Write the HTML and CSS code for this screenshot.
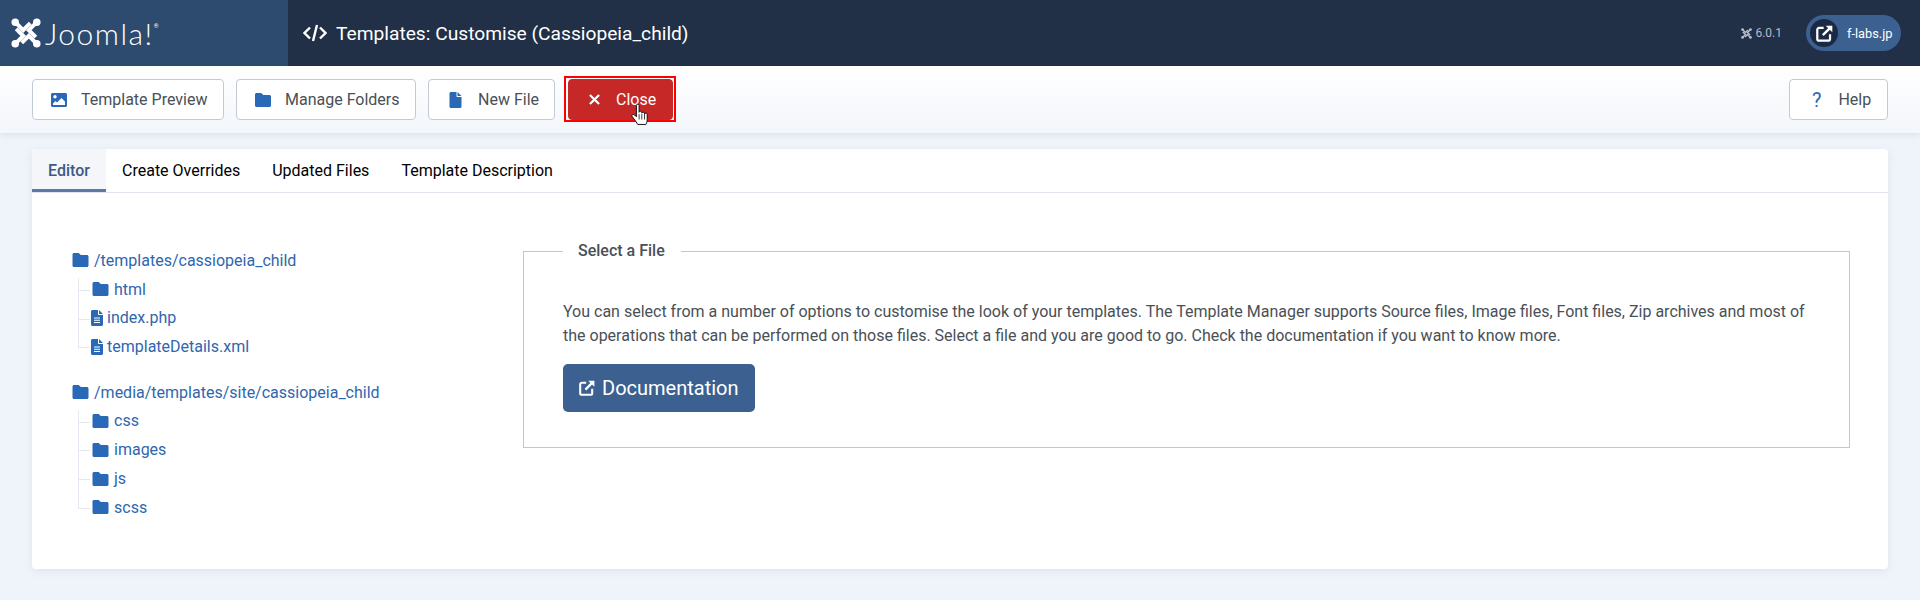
FILE: index.html
```html
<!DOCTYPE html>
<html lang="en">
<head>
    <meta charset="UTF-8">
    <title>Templates: Customise (Cassiopeia_child)</title>
    <link rel="stylesheet" href="styles.css">
</head>
<body>
    <svg class="defs" width="0" height="0">
        <symbol id="i-folder" viewBox="0 0 16 14"><path d="M1.500 0h4.200c.4 0 .8.200 1 .4L8.300 2h6.200c.8 0 1.500.7 1.500 1.500v9c0 .8-.7 1.500-1.500 1.500h-13C.7 14 0 13.300 0 12.500v-11C0 .7.700 0 1.500 0z"/></symbol>
        <symbol id="i-file" viewBox="0 0 12 16"><path d="M1.500 0H7v4.500c0 .3.200.5.500.5H12v9.500c0 .8-.7 1.500-1.500 1.500h-9C.7 16 0 15.300 0 14.500v-13C0 .7.700 0 1.500 0zM8 0l4 4H8z"/></symbol>
        <symbol id="i-filetext" viewBox="0 0 12 16"><path fill-rule="evenodd" d="M1.500 0H7v4.500c0 .3.200.5.500.5H12v9.500c0 .8-.7 1.500-1.500 1.500h-9C.7 16 0 15.300 0 14.500v-13C0 .7.700 0 1.500 0zM3 7.500v1h6v-1zm0 2.200v1h6v-1zm0 2.200v1h6v-1zM8 0l4 4H8z"/></symbol>
        <symbol id="i-ext" viewBox="0 0 20 20"><path fill="none" stroke="currentColor" stroke-width="2.600" d="M9 3.500H3.500a2 2 0 0 0-2 2v11a2 2 0 0 0 2 2h11a2 2 0 0 0 2-2V11"/><path fill="none" stroke="currentColor" stroke-width="2.800" d="M8 12L17 3"/><path d="M11.500 .8h7.700v7.700z" fill="currentColor"/></symbol>
        <symbol id="i-joomla" viewBox="0 0 32 32">
            <g fill="none" stroke="currentColor" stroke-width="4.200">
                <path d="M4.500 4.500L13 13L20.500 5.500"/>
                <path d="M27.500 4.500L19 13L26.500 20.500"/>
                <path d="M27.500 27.500L19 19L11.500 26.500"/>
                <path d="M4.500 27.500L13 19L5.500 11.500"/>
            </g>
            <g fill="currentColor"><circle cx="4.500" cy="4.500" r="4"/><circle cx="27.500" cy="4.500" r="4"/><circle cx="4.500" cy="27.500" r="4"/><circle cx="27.500" cy="27.500" r="4"/></g>
        </symbol>
    </svg>

    <header class="header">
        <div class="brand">
            <svg class="brand_mark"><use href="#i-joomla"/></svg>
            <span class="brand_name">Joomla!</span><span class="brand_reg">®</span>
        </div>
        <div class="title">
            <svg class="title_icon" viewBox="0 0 24 18"><path d="M7 3.500L1.500 9L7 14.500M17 3.500L22.500 9L17 14.500M14 1L10 17" fill="none" stroke="currentColor" stroke-width="2.400"/></svg>
            <h1>Templates: Customise (Cassiopeia_child)</h1>
        </div>
        <div class="version"><svg class="version_mark"><use href="#i-joomla"/></svg>6.0.1</div>
        <div class="site_pill">
            <span class="site_icon"><svg><use href="#i-ext"/></svg></span>
            <span>f-labs.jp</span>
        </div>
    </header>

    <div class="toolbar">
        <button class="tbtn tbtn_preview">
            <svg class="tbtn_icon" viewBox="0 0 16 14"><path fill-rule="evenodd" d="M1.500 0h13c.8 0 1.500.7 1.500 1.500v11c0 .8-.7 1.500-1.500 1.500h-13C.7 14 0 13.300 0 12.500v-11C0 .7.7 0 1.500 0zM4 2a1.700 1.700 0 1 0 0 3.400A1.700 1.700 0 0 0 4 2zM2 12h12V8.500L10.500 5L6 9.500L4.500 8L2 10.500z"/></svg>
            Template Preview
        </button>
        <button class="tbtn tbtn_folders">
            <svg class="tbtn_icon"><use href="#i-folder"/></svg>
            Manage Folders
        </button>
        <button class="tbtn tbtn_new">
            <svg class="tbtn_icon tbtn_icon_file"><use href="#i-file"/></svg>
            New File
        </button>
        <button class="tbtn tbtn_close">
            <svg class="tbtn_icon" viewBox="0 0 12 12"><path d="M1 1L11 11M11 1L1 11" stroke="currentColor" stroke-width="2.400" fill="none"/></svg>
            Close
            <svg class="cursor" viewBox="0 0 20 26"><path d="M6 2.500c0-2 3-2 3 0V10c0-1.500 3-1.500 3 0v1c0-1.500 3-1.500 3 0v1c0-1.500 3-1.500 3 0v6c0 2.500-.5 3.500-1.500 5.500h-9C6 21 4 18 1.500 15c-1.500-2 .8-3.500 2.500-2l2 2z" fill="#fff" stroke="#111" stroke-width="1.100"/><path d="M9 12v6M12 12v6M15 12v6" stroke="#111" stroke-width=".9"/></svg>
        </button>
        <button class="tbtn tbtn_help">
            <span class="help_mark">?</span>
            Help
        </button>
    </div>

    <main class="card">
        <div class="tabs">
            <div class="tab tab_active">Editor</div>
            <div class="tab">Create Overrides</div>
            <div class="tab">Updated Files</div>
            <div class="tab">Template Description</div>
        </div>
        <div class="card_body">
            <div class="tree">
                <div class="tree_root">
                    <div class="tree_row"><svg class="ic_folder"><use href="#i-folder"/></svg><a>/templates/cassiopeia_child</a></div>
                    <ul class="tree_list">
                        <li class="tree_row"><svg class="ic_folder"><use href="#i-folder"/></svg><a>html</a></li>
                        <li class="tree_row"><svg class="ic_file"><use href="#i-filetext"/></svg><a>index.php</a></li>
                        <li class="tree_row"><svg class="ic_file"><use href="#i-filetext"/></svg><a>templateDetails.xml</a></li>
                    </ul>
                </div>
                <div class="tree_root">
                    <div class="tree_row"><svg class="ic_folder"><use href="#i-folder"/></svg><a>/media/templates/site/cassiopeia_child</a></div>
                    <ul class="tree_list">
                        <li class="tree_row"><svg class="ic_folder"><use href="#i-folder"/></svg><a>css</a></li>
                        <li class="tree_row"><svg class="ic_folder"><use href="#i-folder"/></svg><a>images</a></li>
                        <li class="tree_row"><svg class="ic_folder"><use href="#i-folder"/></svg><a>js</a></li>
                        <li class="tree_row"><svg class="ic_folder"><use href="#i-folder"/></svg><a>scss</a></li>
                    </ul>
                </div>
            </div>
            <fieldset class="select_box">
                <legend>Select a File</legend>
                <p>You can select from a number of options to customise the look of your templates. The Template Manager supports Source files, Image files, Font files, Zip archives and most of the operations that can be performed on those files. Select a file and you are good to go. Check the documentation if you want to know more.</p>
                <a class="doc_btn"><svg><use href="#i-ext"/></svg>Documentation</a>
            </fieldset>
        </div>
    </main>
</body>
</html>
```

FILE: styles.css
```css
*{
    box-sizing: border-box;
}
html, body{
    margin: 0;
    height: 600px;
    overflow: hidden;
}
body{
    background-color: #eff4fa;
    font-family: Roboto, "Liberation Sans", sans-serif;
    font-size: 16px;
    color: #495057;
}
.defs{
    position: absolute;
}
.header{
    height: 66px;
    background-color: #212f47;
    color: #fff;
    display: flex;
    align-items: center;
}
.brand{
    width: 288px;
    height: 66px;
    background-color: #2d4a6f;
    display: flex;
    align-items: center;
    padding-left: 11px;
}
.brand_mark{
    width: 30px;
    height: 30px;
    color: #fff;
    margin-right: 4px;
}
.brand_name{
    font-family: Lato, sans-serif;
    font-weight: 300;
    font-size: 30px;
    letter-spacing: 1.500px;
}
.brand_reg{
    font-size: 6px;
    margin: -16px 0 0 0;
}
.title{
    flex: 1;
    display: flex;
    align-items: center;
    padding-left: 15px;
}
.title_icon{
    width: 24px;
    height: 18px;
    margin-right: 9px;
}
h1{
    margin: 0;
    font-size: 19.200px;
    font-weight: 400;
}
.version{
    display: flex;
    align-items: center;
    font-size: 12px;
    color: #b4bdca;
    margin-right: 24px;
}
.version_mark{
    width: 11px;
    height: 11px;
    margin-right: 3px;
}
.site_pill{
    width: 95px;
    height: 36px;
    margin-right: 19px;
    background-color: #3c6090;
    border-radius: 18px;
    display: flex;
    align-items: center;
    font-size: 12.800px;
    padding-left: 4px;
    gap: 9px;
}
.site_icon{
    width: 28px;
    height: 28px;
    border-radius: 50%;
    background-color: #1a2a44;
    display: flex;
    align-items: center;
    justify-content: center;
}
.site_icon svg{
    width: 17px;
    height: 17px;
}
.toolbar{
    height: 67px;
    background: linear-gradient(#fff, #f3f6fb);
    box-shadow: 0 2px 6px rgba(80, 100, 140, .12);
    display: flex;
    align-items: center;
    padding: 0 32px;
    gap: 12px;
}
.tbtn{
    height: 41px;
    background-color: #fff;
    border: 1px solid #c2cad8;
    border-radius: 4px;
    font-family: inherit;
    font-size: 16px;
    color: #495057;
    display: flex;
    align-items: center;
    padding: 0 0 0 18px;
    position: relative;
}
.tbtn_preview{
    width: 192px;
}
.tbtn_folders{
    width: 180px;
}
.tbtn_new{
    width: 127px;
}
.tbtn_icon{
    width: 16px;
    height: 16px;
    margin-right: 14px;
    fill: #2a69b8;
}
.tbtn_icon_file{
    width: 13px;
    margin: 0 16px 0 2px;
}
.tbtn_close{
    width: 105px;
    margin-left: 1px;
    background-color: #c52827;
    border-color: #c52827;
    color: #fff;
    padding-left: 20px;
}
.tbtn_close:after{
    content: "";
    position: absolute;
    left: -5px;
    right: -4px;
    top: -4px;
    bottom: -3px;
    border: 2px solid #f00;
}
.tbtn_close .tbtn_icon{
    width: 11px;
    height: 11px;
    margin-right: 16px;
}
.cursor{
    position: absolute;
    z-index: 1;
    left: 62px;
    top: 23px;
    width: 18px;
    height: 24px;
}
.tbtn_help{
    margin-left: auto;
    width: 99px;
    padding-left: 22px;
}
.help_mark{
    color: #2a69b8;
    font-size: 20px;
    margin-right: 17px;
}
.card{
    margin: 16px 32px 0;
    height: 420px;
    background-color: #fff;
    border-radius: 4px;
    box-shadow: 0 2px 8px rgba(80, 100, 140, .1);
}
.tabs{
    display: flex;
    height: 44px;
    border-bottom: 1px solid #dfe4ee;
}
.tab{
    padding: 0 16px;
    line-height: 43px;
    height: 43px;
    color: #000;
    font-size: 16px;
}
.tab_active{
    width: 74px;
    background-color: #f4f6f9;
    border-bottom: 3px solid #5a7aa6;
    font-weight: 500;
    color: #3c5a86;
}
.card_body{
    display: flex;
    padding: 53px 38px 0 40px;
}
.tree{
    width: 451px;
}
.tree_root{
    margin-bottom: 16.600px;
}
.tree_row{
    height: 28.800px;
    display: flex;
    align-items: center;
    color: #2f66ae;
    position: relative;
}
.tree_list{
    list-style: none;
    margin: 0;
    padding: 0 0 0 20px;
}
.tree_list .tree_row:before{
    content: "";
    position: absolute;
    left: -14px;
    top: -14px;
    width: 11px;
    height: 29px;
    border-left: 1px solid #e3e8f1;
    border-bottom: 1px solid #e3e8f1;
}
.tree_list .tree_row:first-child:before{
    top: 3px;
    height: 12px;
}
.ic_folder{
    width: 17px;
    height: 14px;
    fill: #2a69b8;
    margin-right: 5px;
}
.ic_file{
    width: 12px;
    height: 16px;
    fill: #2a69b8;
    margin: 0 4px 0 -1px;
}
.select_box{
    flex: 1;
    min-width: 0;
    height: 207px;
    margin: -5px 0 0;
    padding: 0 39px;
    border: 1px solid #bcc8da;
}
legend{
    padding: 0 16px 2px 15px;
    font-weight: 500;
    font-size: 16px;
    line-height: 19px;
}
.select_box p{
    margin: 38px 0 0;
    line-height: 24.300px;
    font-size: 16px;
}
.doc_btn{
    display: inline-flex;
    align-items: center;
    margin-top: 15px;
    height: 48px;
    padding: 0 16px;
    background-color: #3c6090;
    border-radius: 5px;
    color: #fff;
    font-size: 20px;
}
.doc_btn svg{
    width: 16px;
    height: 16px;
    margin-right: 7px;
}
```
